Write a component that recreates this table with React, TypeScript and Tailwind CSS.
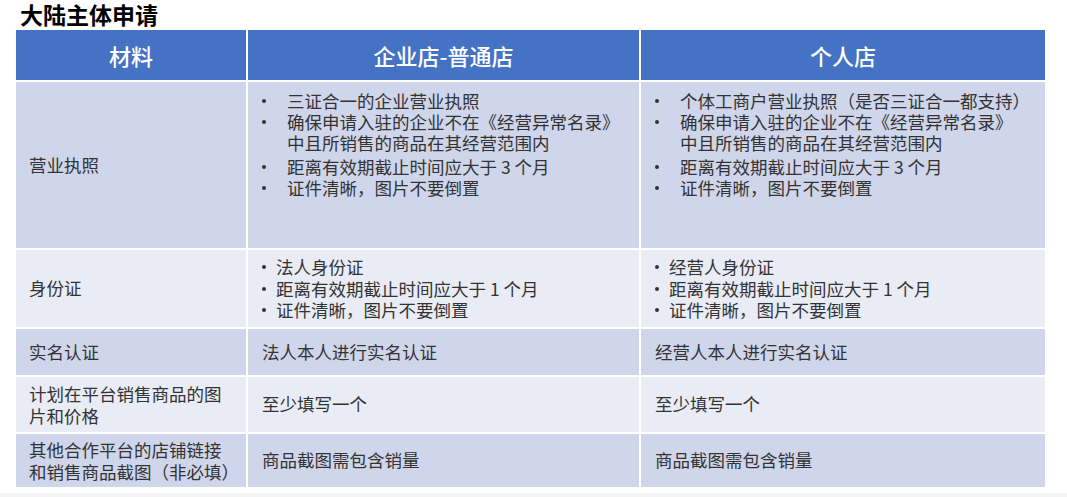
import React from "react";

const font = { fontFamily: '"Noto Sans CJK SC", "Noto Sans", sans-serif' };

function Bullets({ items, indent, lh }: { items: { lines: string[]; extra?: boolean }[]; indent: string; lh: string }) {
  return (
    <div className="flex flex-col">
      {items.map((it, i) => (
        <div key={i} className={`flex ${it.extra ? "mt-[3px]" : ""}`}>
          <div className={`${indent} shrink-0 flex`}>
            <span className={`${lh} flex items-center`}>
              <span className="block w-[4px] h-[4px] rounded-full bg-[#333333]" />
            </span>
          </div>
          <div className="flex flex-col">
            {it.lines.map((l, j) => (
              <span key={j} className={`${lh} whitespace-nowrap`}>
                {l}
              </span>
            ))}
          </div>
        </div>
      ))}
    </div>
  );
}

function Multi({ lines }: { lines: string[] }) {
  return (
    <div className="flex flex-col">
      {lines.map((l, i) => (
        <span key={i} className="leading-[22px] whitespace-nowrap">
          {l}
        </span>
      ))}
    </div>
  );
}

export default function App() {
  const odd = "bg-[#CFD5EA]";
  const even = "bg-[#E9EBF5]";
  const cell = "flex items-center pl-[13px]";
  const cell2 = "flex items-center pl-[14px]";
  const head = "bg-[#4472C4] flex items-center justify-center text-white text-[22px] font-medium";

  return (
    <div className="w-[1067px] h-[497px] bg-white text-[#333333] overflow-hidden" style={font}>
      <div className="h-[30px] pl-[20px] pt-[1px] flex items-start">
        <span className="text-[23px] leading-[26px] font-bold text-black">大陆主体申请</span>
      </div>
      <div className="ml-[16px] w-[1029px] grid grid-cols-[230px_391px_404px] grid-rows-[50px_166px_77px_46px_55px_53px] gap-[2px] text-[17.5px]">
        {/* header */}
        <div className={head}>材料</div>
        <div className={head}>企业店-普通店</div>
        <div className={head}>个人店</div>

        {/* row 1 */}
        <div className={`${odd} ${cell}`}>营业执照</div>
        <div className={`${odd} pt-[8px] pl-[14px]`}>
          <Bullets
            indent="w-[25px]"
            lh="leading-[21px] h-[21px]"
            items={[
              { lines: ["三证合一的企业营业执照"] },
              { lines: ["确保申请入驻的企业不在《经营异常名录》", "中且所销售的商品在其经营范围内"] },
              { lines: ["距离有效期截止时间应大于 3 个月"], extra: true },
              { lines: ["证件清晰，图片不要倒置"] },
            ]}
          />
        </div>
        <div className={`${odd} pt-[8px] pl-[14px]`}>
          <Bullets
            indent="w-[25px]"
            lh="leading-[21px] h-[21px]"
            items={[
              { lines: ["个体工商户营业执照（是否三证合一都支持）"] },
              { lines: ["确保申请入驻的企业不在《经营异常名录》", "中且所销售的商品在其经营范围内"] },
              { lines: ["距离有效期截止时间应大于 3 个月"], extra: true },
              { lines: ["证件清晰，图片不要倒置"] },
            ]}
          />
        </div>

        {/* row 2 */}
        <div className={`${even} ${cell}`}>身份证</div>
        <div className={`${even} ${cell2}`}>
          <Bullets
            indent="w-[14px]"
            lh="leading-[21.5px] h-[21.5px]"
            items={[
              { lines: ["法人身份证"] },
              { lines: ["距离有效期截止时间应大于 1 个月"] },
              { lines: ["证件清晰，图片不要倒置"] },
            ]}
          />
        </div>
        <div className={`${even} ${cell2}`}>
          <Bullets
            indent="w-[14px]"
            lh="leading-[21.5px] h-[21.5px]"
            items={[
              { lines: ["经营人身份证"] },
              { lines: ["距离有效期截止时间应大于 1 个月"] },
              { lines: ["证件清晰，图片不要倒置"] },
            ]}
          />
        </div>

        {/* row 3 */}
        <div className={`${odd} ${cell}`}>实名认证</div>
        <div className={`${odd} ${cell2}`}>法人本人进行实名认证</div>
        <div className={`${odd} ${cell2}`}>经营人本人进行实名认证</div>

        {/* row 4 */}
        <div className={`${even} ${cell}`}>
          <Multi lines={["计划在平台销售商品的图", "片和价格"]} />
        </div>
        <div className={`${even} ${cell2}`}>至少填写一个</div>
        <div className={`${even} ${cell2}`}>至少填写一个</div>

        {/* row 5 */}
        <div className={`${odd} ${cell}`}>
          <Multi lines={["其他合作平台的店铺链接", "和销售商品截图（非必填）"]} />
        </div>
        <div className={`${odd} ${cell2}`}>商品截图需包含销量</div>
        <div className={`${odd} ${cell2}`}>商品截图需包含销量</div>
      </div>
      <div className="mt-[6px] h-[12px] bg-[#F4F4F4]" />
    </div>
  );
}
